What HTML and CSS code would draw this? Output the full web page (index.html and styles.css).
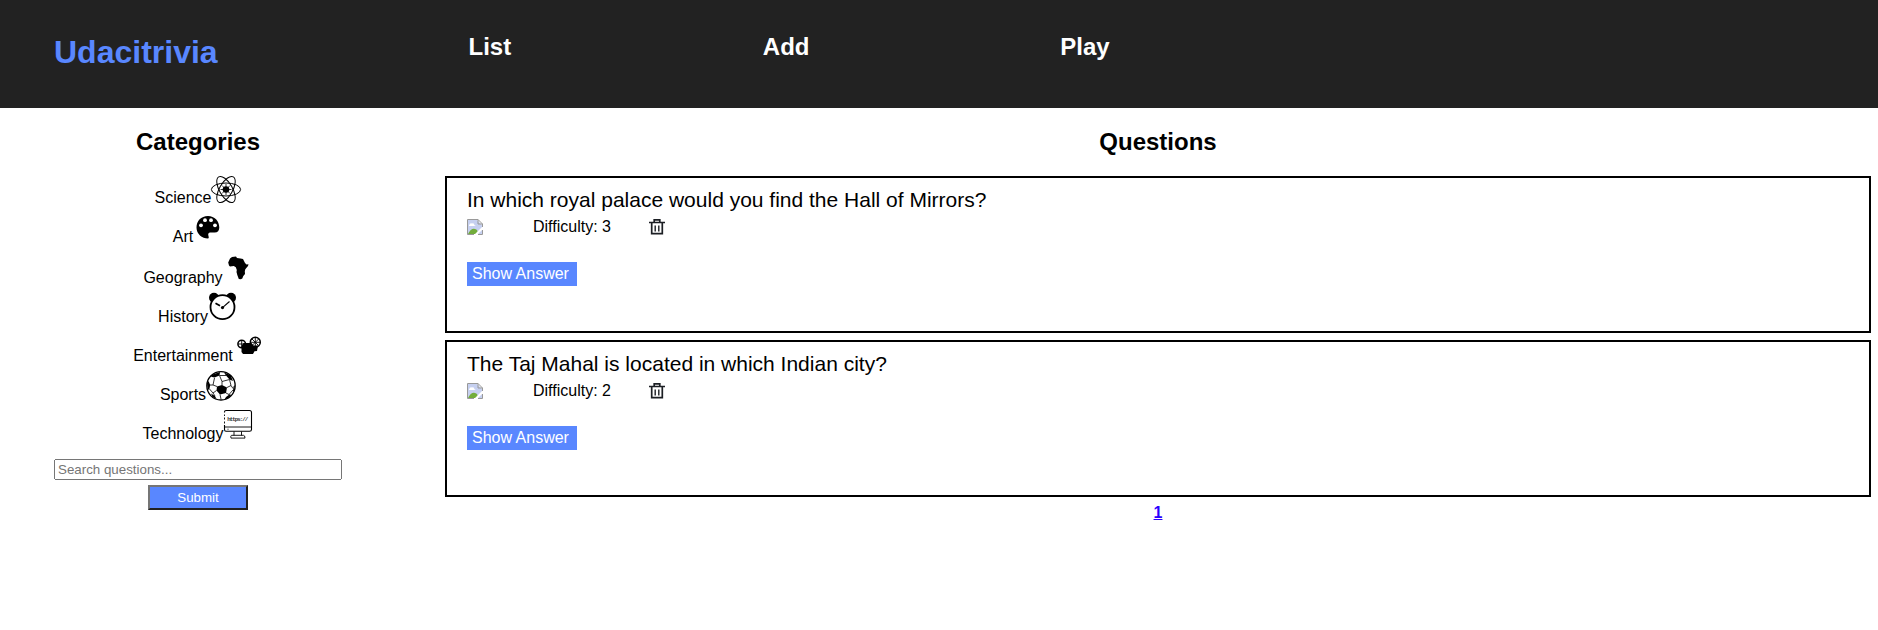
FILE: index.html
```html
<!DOCTYPE html>
<html lang="en">
<head>
<meta charset="utf-8">
<title>Udacitrivia</title>
<link rel="stylesheet" href="styles.css">
</head>
<body>
<header class="header">
  <h1 class="brand">Udacitrivia</h1>
  <h2 class="nav-list">List</h2>
  <h2 class="nav-add">Add</h2>
  <h2 class="nav-play">Play</h2>
</header>
<main class="view">
  <aside class="categories">
    <h2 class="title">Categories</h2>
    <ul class="category-list">
      <li>Science<svg viewBox="0 0 30 30"><g fill="none" stroke="#000" stroke-width="1"><ellipse cx="15" cy="15.500" rx="14.600" ry="6.500"/><ellipse cx="15" cy="15.500" rx="14.600" ry="6.500" transform="rotate(60 15 15.5)"/><ellipse cx="15" cy="15.500" rx="14.600" ry="6.500" transform="rotate(120 15 15.5)"/><path stroke-width=".8" d="M15 10v11M9.500 15.500h11M11 11.500l8 8M19 11.500l-8 8"/></g><circle cx="15" cy="15.500" r="3.300"/></svg></li>
      <li>Art<svg viewBox="0 0 30 30"><path d="M15 3C8 3 3.500 8 3.500 14.500S9 25.500 15 25.600c1.600 0 .2-3 .2-4 0-1.700 1.500-2 3-2h3.500c3 0 4.600-2 4.600-5C26.300 8 21.500 3 15 3z"/><g fill="#fff"><circle cx="8" cy="12.300" r="1.900"/><circle cx="12" cy="7.200" r="1.900"/><circle cx="18" cy="7.200" r="1.900"/><circle cx="22" cy="12.300" r="1.900"/></g></svg></li>
      <li class="low">Geography<svg viewBox="0 0 30 30"><path d="m7 4.500 2-1.500 4-.5 1 1.500 3.500.5 2.500.5 2 4 1.500 1.500 2-.2-.5 1.700-2.700 3.300-.5 2 .2 2.800-1.700 2-1 2.500-1.500.7-2-.2-1.500-4-.8-3 .3-2-1-2.800-2-1.300-3.800.5L6 11.500l-.8-3z"/></svg></li>
      <li class="low">History<svg viewBox="0 0 30 30"><circle cx="6" cy="4.700" r="5"/><circle cx="23" cy="4.700" r="5"/><circle cx="14.500" cy="14.200" r="12" fill="#fff" stroke="#000" stroke-width="1.800"/><path d="M14.500 14.600 21.500 8.500" fill="none" stroke="#000" stroke-width="1.100"/><path d="m7.500 10.300 4.500 2.500" stroke="#000" stroke-width="1.700"/><circle cx="14.500" cy="14.600" r="1.600"/></svg></li>
      <li>Entertainment<svg viewBox="0 0 30 30"><path d="M8.500 14l2-3 8 0 2 2.500 4.500 0-1 5.500-2.500.3-1.500 2.700H10L8.500 20z"/><g fill="none" stroke="#000" stroke-width="1.500"><circle cx="8.700" cy="12" r="3.800"/><circle cx="22.300" cy="10.300" r="5"/></g><path d="M5 12h7.500M8.700 8v8M17.500 10.300h9.500M22.300 5.300v10M19 7l6.600 6.600M25.600 7 19 13.600" stroke="#000" stroke-width=".9"/></svg></li>
      <li>Sports<svg viewBox="0 0 30 30"><circle cx="15" cy="14.800" r="14.200" fill="#fff" stroke="#000" stroke-width="1.300"/><path d="m11 15.500 5-1.500 5 2.500-1 5.500-6 1.500-3.500-4zM6.500 3.500 14 1l-.5 3.500-5 2-3.500-.7zM18 1.500l6.500 2.500L27 10l-3.500-1.500-3.500-4zM1 12l1.500-2 1.700 4-.8 4-1.600 1zM5 22.500l4 2.500 1.500 3-4-2zM18.500 28.500l1.500-2.500 4-3 1 1.500-3 3zM29 14l-1.500 1.500-.5 4.500 1 1z"/><path fill="none" stroke="#000" stroke-width=".8" d="M16 14v-3.500l-2.500-6h6.500M16 10.500l7.500-2M21 16.500l4-2-1.500-6M25 14.500l2 3M11 15.500 7 14H4M7 14 8.500 7M10.500 19.500 7 22l-3.500-4M7 22l2 3M14 23.500l1 4.500M20 22l3 1.500 4-4.500"/></svg></li>
      <li>Technology<svg viewBox="0 0 30 30"><g fill="none" stroke="#000"><path stroke-width="1.100" d="M1.500 2.500V2Q1.500.5 3 .5h23.500Q28.500.5 28.500 2.500v17q0 1.800-2 1.800H3Q1.500 21.300 1.500 19.500v-4.500"/><path stroke-width=".9" d="M1.500 4.500v1.500M1.500 7.500v2M1.500 11.500v2M2 17h26.500M11 21.500v4M18.500 21.500v4M8.500 25.300h12q1.500 0 1.500 2.800H8q-.7-2.500.5-2.800zM4.500 19.200h1"/></g><text x="4.300" y="11.200" textLength="21" class="screen-text">https://</text></svg></li>
    </ul>
    <form class="search">
      <input type="text" placeholder="Search questions...">
      <input type="submit" class="submit" value="Submit">
    </form>
  </aside>
  <section class="questions">
    <h2 class="title">Questions</h2>
    <article class="card">
      <div class="question">In which royal palace would you find the Hall of Mirrors?</div>
      <div class="status">
        <svg class="thumb" viewBox="0 0 16 16"><path fill="#c6d0f0" d="M1 1h9l5 5v9H1z"/><path fill="#fff" d="M2 6.500q1-3 3-2 2-1 2.500 1.800L9 7H2z"/><path fill="#72ad3b" d="M1 15q3-6 7-5 3 .5 3 5z"/><path fill="#fff" d="M7 16 16 7v3l-6 6zM11 0h5v5z"/><path fill="none" stroke="#999" d="M.5 15.500V.500H11L15.500 5v3M11 .500V5h4.500M.5 15.500H7M11 15.500h4.500V11"/></svg>
        <span class="difficulty">Difficulty: 3</span>
        <svg class="trash" viewBox="0 0 16 16"><path fill="none" stroke="#1c1f24" stroke-width="1.700" d="M0 3.500h16M5.200 3.200V.9h5.600v2.300M2.700 3.700v10.900h10.600V3.700"/><path fill="none" stroke="#1c1f24" stroke-width="1.400" d="M6.200 6.400v6M9.800 6.400v6"/></svg>
      </div>
      <div class="show-answer">Show Answer</div>
    </article>
    <article class="card">
      <div class="question">The Taj Mahal is located in which Indian city?</div>
      <div class="status">
        <svg class="thumb" viewBox="0 0 16 16"><path fill="#c6d0f0" d="M1 1h9l5 5v9H1z"/><path fill="#fff" d="M2 6.500q1-3 3-2 2-1 2.500 1.800L9 7H2z"/><path fill="#72ad3b" d="M1 15q3-6 7-5 3 .5 3 5z"/><path fill="#fff" d="M7 16 16 7v3l-6 6zM11 0h5v5z"/><path fill="none" stroke="#999" d="M.5 15.500V.500H11L15.500 5v3M11 .500V5h4.500M.5 15.500H7M11 15.500h4.500V11"/></svg>
        <span class="difficulty">Difficulty: 2</span>
        <svg class="trash" viewBox="0 0 16 16"><path fill="none" stroke="#1c1f24" stroke-width="1.700" d="M0 3.500h16M5.200 3.200V.9h5.600v2.300M2.700 3.700v10.900h10.600V3.700"/><path fill="none" stroke="#1c1f24" stroke-width="1.400" d="M6.200 6.400v6M9.800 6.400v6"/></svg>
      </div>
      <div class="show-answer">Show Answer</div>
    </article>
    <div class="pagination"><span class="page">1</span></div>
  </section>
</main>
</body>
</html>
```
FILE: styles.css
```css
* { box-sizing: border-box; }
body {
  margin: 0;
  background: #fff;
  color: #000;
  font-family: "Liberation Sans", Arial, sans-serif;
  font-size: 16px;
}
h1, h2 { margin: 0; }
.header {
  display: grid;
  grid-template-columns: 414.500px 294.300px 297.500px 1fr;
  align-items: start;
  height: 108px;
  padding-left: 54px;
  background: #222;
  color: #fff;
}
.brand { padding-top: 34px; font-size: 32px; line-height: 37px; color: #5987ff; }
.nav-list, .nav-add, .nav-play { padding-top: 33px; font-size: 24px; line-height: 27px; }
.view { display: flex; }
.categories {
  display: flex;
  flex-direction: column;
  width: 396px;
  padding: 0 54px;
}
.title {
  height: 68px;
  padding-top: 20px;
  font-size: 24px;
  line-height: 27px;
  text-align: center;
}
.category-list {
  display: grid;
  grid-auto-rows: 39.4px;
  margin: 0;
  padding: 0;
  height: 275px;
  list-style: none;
}
.category-list li {
  display: flex;
  justify-content: center;
  align-items: flex-start;
  padding-top: 13px;
  line-height: 18px;
}
.category-list .low { padding-top: 14px; }
.category-list svg { width: 30px; height: 30px; margin-top: -15px; flex: none; overflow: visible; }
.screen-text { font: bold 5.800px "Liberation Mono", monospace; fill: #333; }
.search { display: flex; flex-direction: column; align-items: center; gap: 5px; padding-top: 8px; }
.search input { font: 13.333px "Liberation Sans", Arial, sans-serif; }
.search input[type="text"] { width: 288px; height: 21px; padding: 1px 2px; }
.search .submit {
  width: 100px;
  height: 25px;
  padding: 0;
  border: 2px solid;
  border-color: #767676 #212121 #212121 #767676;
  background: #5987ff;
  color: #fff;
}
.questions { width: 1426px; margin-left: 49px; }
.card {
  height: 157px;
  margin-bottom: 7px;
  padding: 10px 20px 0;
  border: 2px solid #000;
}
.question { font-size: 21px; line-height: 24px; }
.status { display: flex; align-items: flex-start; margin-top: 7px; height: 16px; line-height: 18px; }
.thumb { width: 16px; height: 16px; margin-right: 50px; }
.difficulty { width: 116px; margin-top: -1px; }
.trash { width: 16px; height: 16px; }
.show-answer {
  width: 110px;
  height: 24px;
  margin-top: 27px;
  padding: 3px 5px;
  background: #5987ff;
  color: #fff;
  line-height: 18px;
}
.pagination { text-align: center; font-weight: bold; line-height: 18px; }
.page { color: #2a00ff; text-decoration: underline; }
```
